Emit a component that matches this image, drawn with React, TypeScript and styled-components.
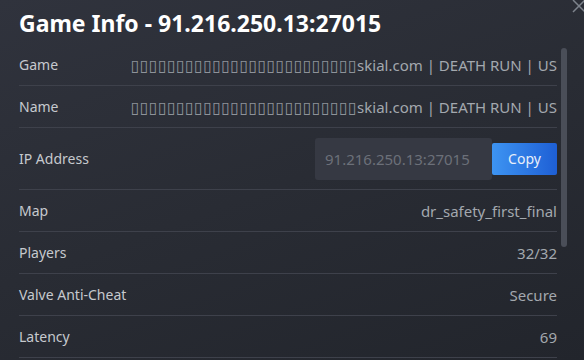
import React from "react";
import styled, { createGlobalStyle } from "styled-components";

const Global = createGlobalStyle`
  html, body { margin: 0; padding: 0; background: #262930; }
  body { font-family: "Noto Sans", "Open Sans", sans-serif; overflow: hidden; }
`;

const Dialog = styled.div`
  position: relative;
  width: 584px;
  height: 360px;
  overflow: hidden;
  background: linear-gradient(160deg, #30333d 0%, #292c34 50%, #22252c 100%);
  display: flex;
  flex-direction: column;
`;

const Close = styled.div`
  position: absolute;
  top: -4px;
  right: -2px;
  width: 14px;
  height: 14px;
  color: #7d838c;
`;

const Title = styled.h1`
  margin: 0;
  padding: 7px 19px 0;
  height: 44px;
  box-sizing: border-box;
  font-size: 23px;
  font-weight: 700;
  color: #ffffff;
  white-space: nowrap;
`;

const Body = styled.div`
  flex: 1;
  display: flex;
  min-height: 0;
`;

const List = styled.div`
  flex: 1;
  padding-left: 19px;
  display: flex;
  flex-direction: column;
`;

const Gutter = styled.div`
  width: 27px;
  flex: none;
  display: flex;
  justify-content: flex-start;
  padding-left: 4px;
  box-sizing: border-box;
`;

const Thumb = styled.div`
  margin-top: 4px;
  width: 6px;
  height: 199px;
  border-radius: 3px;
  background: #4a4e58;
`;

const Row = styled.div<{ $tall?: boolean }>`
  height: ${(p) => (p.$tall ? 61 : 41)}px;
  flex: none;
  display: flex;
  align-items: center;
  justify-content: space-between;
  border-bottom: 1px solid #3e414b;
`;

const Label = styled.span`
  color: #c6c9ce;
  font-size: 14px;
`;

const Value = styled.span`
  color: #a3a8ae;
  font-size: 15px;
  white-space: nowrap;
`;

const Tofu = styled.span`
  font-family: "DejaVu Sans", sans-serif;
  font-size: 16px;
  letter-spacing: 0.25px;
  color: #8e939a;
`;

const IpGroup = styled.div`
  display: flex;
  align-items: center;
`;

const IpField = styled.div`
  width: 177px;
  height: 42px;
  box-sizing: border-box;
  padding-left: 10px;
  display: flex;
  align-items: center;
  background: #363943;
  border-radius: 3px;
  color: #6c7079;
  font-size: 15px;
  white-space: nowrap;
`;

const CopyButton = styled.button`
  width: 65px;
  height: 32px;
  border: none;
  border-radius: 2px;
  background: linear-gradient(90deg, #3d94f2 0%, #1e5fd5 100%);
  color: #e8effa;
  font-family: inherit;
  font-size: 14px;
  padding: 0;
  cursor: pointer;
`;

const TOFU = "\u25AF".repeat(25);

const rows: { label: string; value: string }[] = [
  { label: "Map", value: "dr_safety_first_final" },
  { label: "Players", value: "32/32" },
  { label: "Valve Anti-Cheat", value: "Secure" },
  { label: "Latency", value: "69" },
];

export default function App() {
  return (
    <>
      <Global />
      <Dialog>
        <Close>
          <svg width="14" height="14" viewBox="0 0 14 14">
            <path d="M1 1L13 13M13 1L1 13" stroke="currentColor" strokeWidth="1.5" />
          </svg>
        </Close>
        <Title>Game Info - 91.216.250.13:27015</Title>
        <Body>
          <List>
            <Row>
              <Label>Game</Label>
              <Value>
                <Tofu>{TOFU}</Tofu>skial.com | DEATH RUN | US
              </Value>
            </Row>
            <Row>
              <Label>Name</Label>
              <Value>
                <Tofu>{TOFU}</Tofu>skial.com | DEATH RUN | US
              </Value>
            </Row>
            <Row $tall>
              <Label>IP Address</Label>
              <IpGroup>
                <IpField>91.216.250.13:27015</IpField>
                <CopyButton>Copy</CopyButton>
              </IpGroup>
            </Row>
            {rows.map((r) => (
              <Row key={r.label}>
                <Label>{r.label}</Label>
                <Value>{r.value}</Value>
              </Row>
            ))}
          </List>
          <Gutter>
            <Thumb />
          </Gutter>
        </Body>
      </Dialog>
    </>
  );
}
